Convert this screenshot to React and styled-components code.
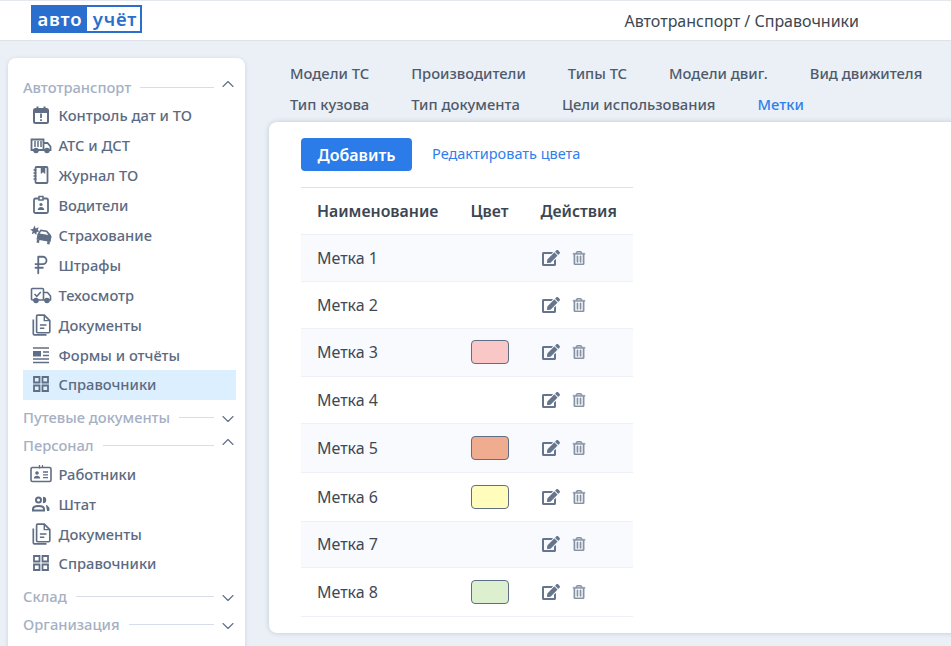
import React from "react";
import styled, { createGlobalStyle } from "styled-components";
import { ChevronUp, ChevronDown, RussianRuble } from "lucide-react";
import { FaEdit, FaRegTrashAlt } from "react-icons/fa";

const GlobalStyle = createGlobalStyle`
  html, body {
    margin: 0;
    height: 646px;
    overflow: hidden;
    background: #ebf0f7;
    font-family: "Noto Sans", "Open Sans", sans-serif;
  }
  * { box-sizing: border-box; }
`;

const Page = styled.div`
  width: 951px;
  height: 646px;
  overflow: hidden;
`;

const TopBar = styled.header`
  height: 41px;
  background: #fff;
  border-top: 1px solid #e4e7ec;
  border-bottom: 1px solid #dfe3e9;
  display: flex;
  align-items: center;
  padding: 0 92px 0 31px;
  justify-content: space-between;
`;

const Logo = styled.div`
  width: 111px;
  height: 28px;
  margin-top: -3px;
  display: flex;
  border: 2px solid #2a6fce;
  background: #2a6fce;
  font-size: 18.5px;
  font-weight: 600;
  letter-spacing: 0.9px;
  line-height: 23px;
`;

const LogoPart = styled.span`
  flex: ${(p) => (p.$light ? "0 0 53px" : "1")};
  padding-left: ${(p) => (p.$light ? "3px" : "0")};
  text-align: center;
  color: ${(p) => (p.$light ? "#2a6fce" : "#fff")};
  background: ${(p) => (p.$light ? "#fff" : "transparent")};
`;

const PageTitle = styled.div`
  font-size: 16px;
  color: #3e4652;
`;

const Body = styled.div`
  display: flex;
  align-items: flex-start;
`;

const GroupHead = styled.div`
  display: flex;
  align-items: center;
  height: 28px;
  margin-right: -2px;
  font-size: 14.7px;
  font-weight: 500;
  color: #a5b0c3;
  &:first-child {
    height: 27px;
    padding-top: 1px;
  }
`;

const GroupLine = styled.span`
  flex: 1;
  height: 1px;
  margin-left: 9px;
  background: #d6deea;
`;

const Chevron = styled.span`
  display: flex;
  flex: none;
  margin-left: 4px;
  color: #5f6e85;
  transform: translateY(${(p) => (p.$open ? "-3px" : "2px")});
`;

const Sidebar = styled.aside`
  flex: 0 0 237px;
  height: 620px;
  margin: 17px 0 0 8px;
  padding: 15px 9px 0 15px;
  background: #fff;
  border-radius: 8px;
  box-shadow: 0 1px 4px rgba(60, 80, 110, 0.18);
`;

const MenuList = styled.div`
  margin-bottom: 3px;
`;

const MenuRow = styled.div`
  display: flex;
  align-items: center;
  height: 30px;
  padding-left: 7px;
  padding-bottom: ${(p) => (p.$lifted ? "2px" : "0")};
  font-size: 14.7px;
  font-weight: 500;
  color: #5c6b82;
  background: ${(p) => (p.$active ? "#dcefff" : "transparent")};
`;

const MenuIcon = styled.span`
  flex: 0 0 22px;
  height: 22px;
  margin-right: 6.5px;
  display: flex;
  align-items: center;
  justify-content: center;
  color: #5f6e85;
`;

const Main = styled.main`
  flex: 1;
  min-width: 0;
  padding: 17px 0 0 24px;
`;

const Tabs = styled.nav`
  display: flex;
  flex-wrap: wrap;
  width: 690px;
  margin-bottom: 2px;
`;

const Tab = styled.span`
  padding: 0 21px;
  height: 31px;
  line-height: 31px;
  font-size: 14.75px;
  font-weight: 500;
  white-space: nowrap;
  color: ${(p) => (p.$active ? "#2f80ed" : "#4f5a6b")};
`;

const Panel = styled.section`
  width: 700px;
  height: 511px;
  padding: 16px 0 0 32px;
  background: #fff;
  border-radius: 8px 0 0 8px;
  box-shadow: 0 0 5px rgba(60, 80, 110, 0.25);
`;

const Actions = styled.div`
  display: flex;
  align-items: center;
  margin-bottom: 16px;
`;

const AddButton = styled.button`
  width: 111px;
  height: 33px;
  border: 0;
  border-radius: 4px;
  background: #2b7be8;
  color: #fff;
  font: 600 16px "Noto Sans", sans-serif;
`;

const TextLink = styled.a`
  margin: -3px 0 0 20px;
  font-size: 14.5px;
  color: #2f80ed;
`;

const Table = styled.table`
  width: 332px;
  border-collapse: collapse;
  border-top: 1px solid #dde3ea;
  font-size: 16px;
`;

const HeadCell = styled.th`
  height: 47px;
  padding: 0 16px;
  text-align: left;
  font-size: 15.85px;
  font-weight: 600;
  white-space: nowrap;
  color: #3c4552;
  border-bottom: 1px solid #edf0f4;
`;

const Row = styled.tr`
  background: ${(p) => (p.$odd ? "#f8fafd" : "#fff")};
  border-bottom: 1px solid #edf0f4;
`;

const Cell = styled.td`
  height: ${(p) => p.$height}px;
  padding: 0 16px 1px;
  color: #3f4855;
`;

const Swatch = styled.div`
  width: 38px;
  height: 24px;
  border: 1px solid #5f6e85;
  border-radius: 4px;
  background: ${(p) => p.$color};
`;

const RowTools = styled.div`
  display: flex;
  align-items: center;
  gap: 12px;
  padding-left: 1px;
`;

const EditIcon = styled(FaEdit)`
  font-size: 18px;
  color: #66758c;
`;

const TrashIcon = styled(FaRegTrashAlt)`
  font-size: 14px;
  color: #8793a6;
  stroke: currentColor;
  stroke-width: 14;
`;

const Ico = ({ children, w = 20, h = 20, vb = "0 0 20 20" }) => (
  <svg width={w} height={h} viewBox={vb} fill="none" stroke="currentColor" strokeWidth="2">
    {children}
  </svg>
);

const CalendarIcon = () => (
  <Ico>
    <rect x="3" y="4" width="14" height="14" rx="1.5" />
    <path d="M3 6.5h14" strokeWidth="3" />
    <path d="M6.5 1.5v3M13.5 1.5v3" />
    <path d="M10 8.5v4.5M10 14.3v1.6" strokeWidth="1.8" />
  </Ico>
);

const CargoIcon = () => (
  <Ico w={22} h={20} vb="0 0 22 20">
    <path d="M4 15H1.5V4.500h12V15H8" strokeWidth="1.800" />
    <path d="M5 6v6M8 6v6M11 6v6" strokeWidth="1.500" />
    <path d="M14 8h3.500l3 3.500V15h-1.500M14 15h1" strokeWidth="1.800" />
    <circle cx="6" cy="15.500" r="1.800" fill="currentColor" />
    <circle cx="17" cy="15.500" r="1.800" fill="currentColor" />
  </Ico>
);

const JournalIcon = () => (
  <Ico>
    <rect x="4.500" y="2" width="12" height="16" rx="1" strokeWidth="1.800" />
    <path d="M10 2.500v6l2-1.500 2 1.500v-6" fill="currentColor" strokeWidth="0.500" />
    <path d="M2.500 5h3M2.500 8h3M2.500 11h3M2.500 14h3" strokeWidth="1.400" />
  </Ico>
);

const BadgeIcon = () => (
  <Ico>
    <rect x="3" y="3.500" width="14" height="14.500" rx="1.500" strokeWidth="1.800" />
    <path d="M8 1.500h4v3.500H8z" fill="#fff" strokeWidth="1.500" />
    <circle cx="10" cy="9.500" r="1.600" fill="currentColor" stroke="none" />
    <path d="M6.800 15c0-4 6.400-4 6.400 0z" fill="currentColor" stroke="none" />
  </Ico>
);

const CrashIcon = () => (
  <Ico w={22} h={20} vb="0 0 22 20">
    <path d="M7.500 9l3-4.500 6.500 1 3.500 4 1 2-1 5.500-14-2.500z" fill="currentColor" stroke="none" />
    <path d="M11.200 6.300l5 .8 2.200 2.800-8.700-1.300z" fill="#fff" stroke="none" />
    <path d="M7 14.500l-.5 3 2.500.5.500-3zM17.500 16l-.5 3 2.500.5.500-3z" fill="currentColor" stroke="none" />
    <path d="M4.500 0.500l1.200 3 3-1.200-1 2.800 2 1.500-3 .5-.3 3-2-2.200-2.700 1.300 1-3L0 4.500l3-.5z" fill="currentColor" stroke="none" />
  </Ico>
);

const CheckTruckIcon = () => (
  <Ico w={22} h={20} vb="0 0 22 20">
    <path d="M4 15H2.500a1 1 0 0 1-1-1V4.500a1 1 0 0 1 1-1h10a1 1 0 0 1 1 1V15H8" strokeWidth="1.600" />
    <path d="M4.500 9l2.300 2.300 4-4.300" strokeWidth="1.500" />
    <path d="M14 7.500h3.500l3 3.500V15h-1.500M14 15h1" strokeWidth="1.600" />
    <circle cx="6" cy="15.500" r="1.800" fill="currentColor" />
    <circle cx="17" cy="15.500" r="1.800" fill="currentColor" />
  </Ico>
);

const DocsIcon = () => (
  <Ico w={22} h={22}>
    <path d="M7 1h6l5 5v10a1 1 0 0 1-1 1H7a1 1 0 0 1-1-1V2a1 1 0 0 1 1-1z" strokeWidth="1.500" />
    <path d="M13 1v5h5" strokeWidth="1.300" />
    <path d="M9 10h6M9 13h4" strokeWidth="1.300" />
    <path d="M3 5v13a1 1 0 0 0 1 1h11" strokeWidth="1.500" />
  </Ico>
);

const FormsIcon = () => (
  <Ico>
    <path d="M2 3h16M2 17.500h16M12 7h6M12 10.500h6M2 14h16" strokeWidth="1.500" />
    <rect x="2" y="6" width="8" height="5.500" fill="currentColor" stroke="none" />
  </Ico>
);

const StaffCardIcon = () => (
  <Ico w={22} h={20} vb="0 0 22 20">
    <rect x="1" y="3.500" width="20" height="14" rx="1.500" strokeWidth="1.600" />
    <path d="M9.500 1v3.500M12.500 1v2" strokeWidth="1.200" />
    <circle cx="7" cy="9" r="1.800" fill="currentColor" stroke="none" />
    <path d="M3.800 14.500c0-3.800 6.400-3.800 6.400 0z" fill="currentColor" stroke="none" />
    <path d="M13 8h5M13 10.800h5M13 13.600h5" strokeWidth="1.300" />
  </Ico>
);

const PeopleIcon = () => (
  <Ico>
    <circle cx="7.500" cy="6" r="2.500" strokeWidth="2" />
    <path d="M2 16.500v-1.500c0-4 11-4 11 0v1.500z" strokeWidth="2" />
    <path d="M12 3.500a2.500 2.500 0 0 1 0 5" fill="currentColor" strokeWidth="1.500" />
    <path d="M15 11.500c2 .5 3 1.800 3 3.500v1.500h-2" fill="currentColor" strokeWidth="1" />
  </Ico>
);

const GridIcon = () => (
  <Ico>
    <path d="M3 3h5.500v5.500H3zM11.500 3H17v5.500h-5.500zM3 11.500h5.500V17H3zM11.500 11.500H17V17h-5.500z" strokeWidth="1.800" />
  </Ico>
);

const RubleIcon = () => <RussianRuble size={22} strokeWidth={2} />;

const menuTop = [
  { Icon: CalendarIcon, text: "Контроль дат и ТО" },
  { Icon: CargoIcon, text: "АТС и ДСТ" },
  { Icon: JournalIcon, text: "Журнал ТО" },
  { Icon: BadgeIcon, text: "Водители" },
  { Icon: CrashIcon, text: "Страхование" },
  { Icon: RubleIcon, text: "Штрафы" },
  { Icon: CheckTruckIcon, text: "Техосмотр" },
  { Icon: DocsIcon, text: "Документы" },
  { Icon: FormsIcon, text: "Формы и отчёты" },
  { Icon: GridIcon, text: "Справочники", active: true, lifted: true },
];

const menuStaff = [
  { Icon: StaffCardIcon, text: "Работники" },
  { Icon: PeopleIcon, text: "Штат" },
  { Icon: DocsIcon, text: "Документы" },
  { Icon: GridIcon, text: "Справочники", lifted: true },
];

const tabs = [
  "Модели ТС",
  "Производители",
  "Типы ТС",
  "Модели двиг.",
  "Вид движителя",
  "Тип кузова",
  "Тип документа",
  "Цели использования",
  "Метки",
];

const labels = [
  { name: "Метка 1", height: 47 },
  { name: "Метка 2", height: 47 },
  { name: "Метка 3", height: 48, color: "#fac7c7" },
  { name: "Метка 4", height: 47 },
  { name: "Метка 5", height: 49, color: "#efac8e" },
  { name: "Метка 6", height: 49, color: "#fffcbc" },
  { name: "Метка 7", height: 46 },
  { name: "Метка 8", height: 49, color: "#dcf0cf" },
];

const Group = ({ title, open, items }) => (
  <>
    <GroupHead>
      {title}
      <GroupLine />
      <Chevron $open={open}>
        {open ? <ChevronUp size={20} strokeWidth={1.3} /> : <ChevronDown size={20} strokeWidth={1.3} />}
      </Chevron>
    </GroupHead>
    {items && (
      <MenuList>
        {items.map(({ Icon, text, active, lifted }) => (
          <MenuRow key={text} $active={active} $lifted={lifted}>
            <MenuIcon>
              <Icon />
            </MenuIcon>
            {text}
          </MenuRow>
        ))}
      </MenuList>
    )}
  </>
);

export default function App() {
  return (
    <Page>
      <GlobalStyle />
      <TopBar>
        <Logo>
          <LogoPart>авто</LogoPart>
          <LogoPart $light>учёт</LogoPart>
        </Logo>
        <PageTitle>Автотранспорт / Справочники</PageTitle>
      </TopBar>
      <Body>
        <Sidebar>
          <Group title="Автотранспорт" open items={menuTop} />
          <Group title="Путевые документы" />
          <Group title="Персонал" open items={menuStaff} />
          <Group title="Склад" />
          <Group title="Организация" />
        </Sidebar>
        <Main>
          <Tabs>
            {tabs.map((t) => (
              <Tab key={t} $active={t === "Метки"}>
                {t}
              </Tab>
            ))}
          </Tabs>
          <Panel>
            <Actions>
              <AddButton>Добавить</AddButton>
              <TextLink>Редактировать цвета</TextLink>
            </Actions>
            <Table>
              <thead>
                <tr>
                  <HeadCell>Наименование</HeadCell>
                  <HeadCell>Цвет</HeadCell>
                  <HeadCell>Действия</HeadCell>
                </tr>
              </thead>
              <tbody>
                {labels.map((l, i) => (
                  <Row key={l.name} $odd={i % 2 === 0}>
                    <Cell $height={l.height}>{l.name}</Cell>
                    <Cell $height={l.height}>{l.color && <Swatch $color={l.color} />}</Cell>
                    <Cell $height={l.height}>
                      <RowTools>
                        <EditIcon />
                        <TrashIcon />
                      </RowTools>
                    </Cell>
                  </Row>
                ))}
              </tbody>
            </Table>
          </Panel>
        </Main>
      </Body>
    </Page>
  );
}
